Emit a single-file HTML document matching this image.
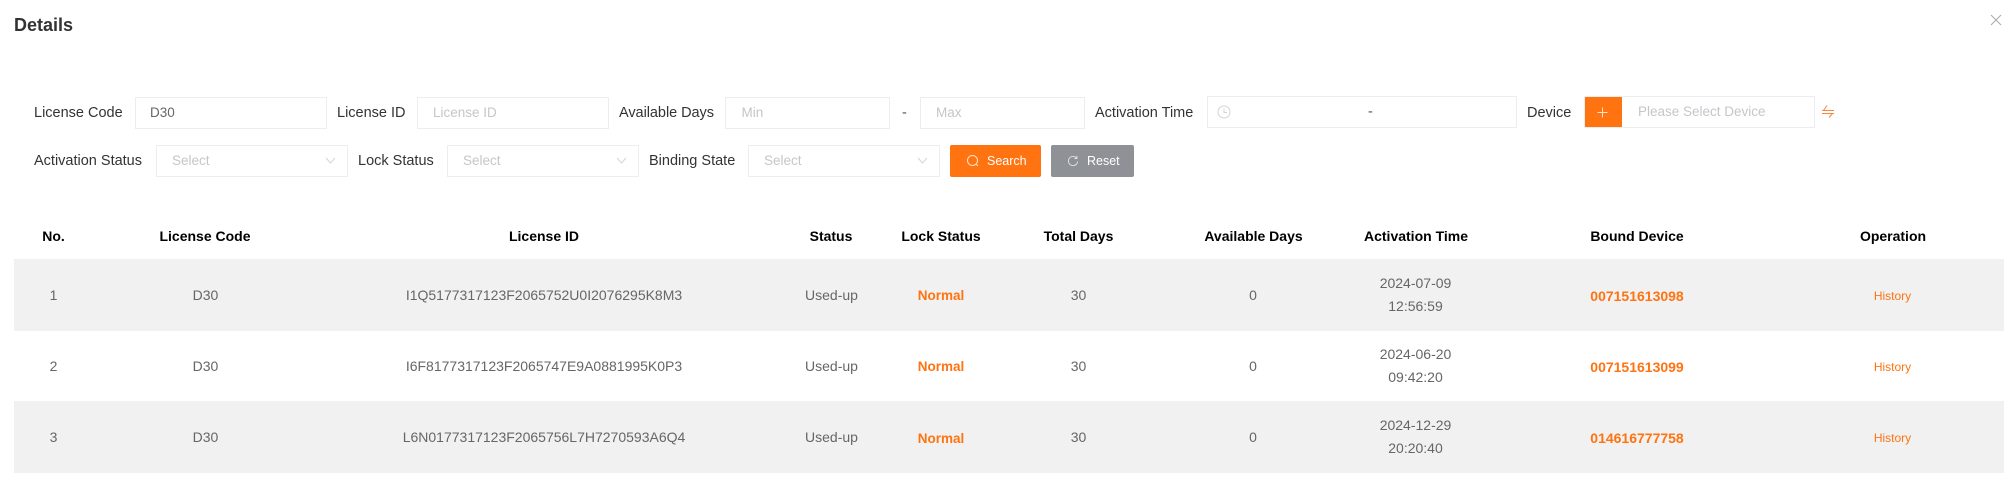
<!DOCTYPE html>
<html><head><meta charset="utf-8"><style>
html,body{margin:0;padding:0;background:#fff;width:2008px;height:479px;overflow:hidden;font-family:"Liberation Sans",sans-serif}
.a{position:absolute;white-space:nowrap}
.l{font-size:14.5px;color:#333;line-height:20px}
.b{position:absolute;box-sizing:border-box;border:1px solid #ebedf0;background:#fff}
.p{font-size:13.5px;color:#c4c6ca;line-height:20px}
.h{font-size:14px;font-weight:bold;color:#000;line-height:20px;transform:translateX(-50%);top:226px}
.c{font-size:14px;color:#666;line-height:20px;transform:translateX(-50%);text-align:center}
.o{font-size:14px;color:#ff7311;font-weight:500;line-height:20px;transform:translateX(-50%)}
.r{position:absolute;left:14px;width:1990px;background:#f1f1f1}
svg{position:absolute}
</style></head><body>
<div class="a" style="left:14px;top:14px;font-size:18px;font-weight:bold;color:#333;line-height:22px">Details</div>
<svg style="left:1990px;top:14px" width="12" height="12" viewBox="0 0 12 12"><path d="M1 1L11 11M11 1L1 11" stroke="#aaa" stroke-width="1" fill="none"/></svg>

<div class="a l" style="left:34px;top:102.5px">License Code</div>
<div class="b" style="left:135px;top:97px;width:192px;height:32px"></div>
<div class="a" style="left:150px;top:103px;font-size:13.5px;color:#666;line-height:20px">D30</div>
<div class="a l" style="left:337px;top:102.5px">License ID</div>
<div class="b" style="left:417px;top:97px;width:192px;height:32px"></div>
<div class="a p" style="left:433px;top:103px">License ID</div>
<div class="a l" style="left:619px;top:102.5px;letter-spacing:-0.05px">Available Days</div>
<div class="b" style="left:725px;top:97px;width:165px;height:32px"></div>
<div class="a p" style="left:741.5px;top:103px">Min</div>
<div class="a l" style="left:902px;top:102.5px;color:#555">-</div>
<div class="b" style="left:920px;top:97px;width:165px;height:32px"></div>
<div class="a p" style="left:936px;top:103px">Max</div>
<div class="a l" style="left:1095px;top:102.5px">Activation Time</div>
<div class="b" style="left:1207px;top:96px;width:310px;height:32px"></div>
<svg style="left:1217px;top:105px" width="14" height="14" viewBox="0 0 14 14"><circle cx="7" cy="7" r="6" stroke="#d2d4d7" fill="none"/><path d="M7 3.5V7.5H10" stroke="#d2d4d7" fill="none"/></svg>
<div class="a l" style="left:1368px;top:101.5px;color:#555">-</div>
<div class="a l" style="left:1527px;top:102.5px">Device</div>
<div class="b" style="left:1584px;top:96px;width:231px;height:32px"></div>
<div class="a" style="left:1585px;top:97px;width:37px;height:30px;background:#ff7311"></div>
<svg style="left:1597px;top:107px" width="11" height="11" viewBox="0 0 11 11"><path d="M5.5 0.5V10.5M0.5 5.5H10.5" stroke="#ffe3cc" stroke-width="1" fill="none"/></svg>
<div class="a p" style="left:1638px;top:102px">Please Select Device</div>
<svg style="left:1821px;top:104px" width="14" height="15" viewBox="0 0 14 15"><path d="M1 6.5H13M6 1.5L2.5 6.5M1 9.5H13M8 13.5L11.5 9.5" stroke="#f58a3c" stroke-width="1" fill="none"/></svg>

<div class="a l" style="left:34px;top:150.5px">Activation Status</div>
<div class="b" style="left:156px;top:145px;width:192px;height:32px"></div>
<div class="a p" style="left:172px;top:151px">Select</div>
<svg style="left:325px;top:157px" width="11" height="7" viewBox="0 0 11 7"><path d="M1 1L5.5 6L10 1" stroke="#d2d4d7" fill="none"/></svg>
<div class="a l" style="left:358px;top:150.5px">Lock Status</div>
<div class="b" style="left:447px;top:145px;width:192px;height:32px"></div>
<div class="a p" style="left:463px;top:151px">Select</div>
<svg style="left:616px;top:157px" width="11" height="7" viewBox="0 0 11 7"><path d="M1 1L5.5 6L10 1" stroke="#d2d4d7" fill="none"/></svg>
<div class="a l" style="left:649px;top:150.5px">Binding State</div>
<div class="b" style="left:748px;top:145px;width:192px;height:32px"></div>
<div class="a p" style="left:764px;top:151px">Select</div>
<svg style="left:917px;top:157px" width="11" height="7" viewBox="0 0 11 7"><path d="M1 1L5.5 6L10 1" stroke="#d2d4d7" fill="none"/></svg>

<div class="a" style="left:950px;top:145px;width:91px;height:32px;background:#ff7311;border-radius:2px"></div>
<svg style="left:966px;top:154px" width="14" height="14" viewBox="0 0 14 14"><circle cx="6.5" cy="6.5" r="5" stroke="#ffe3cc" fill="none"/><path d="M10 10L12 12" stroke="#ffe3cc" fill="none"/></svg>
<div class="a" style="left:987px;top:151px;font-size:12.5px;color:#fff;line-height:20px">Search</div>
<div class="a" style="left:1051px;top:145px;width:83px;height:32px;background:#8e9196;border-radius:2px"></div>
<svg style="left:1067px;top:155px" width="12" height="12" viewBox="0 0 13 13"><path d="M10.5 3.5A5 5 0 1 0 11.5 7M10.8 1V3.8H8" stroke="#e4e4e4" fill="none"/></svg>
<div class="a" style="left:1087px;top:151px;font-size:12.5px;color:#fff;line-height:20px">Reset</div>

<div class="a h" style="left:53.5px">No.</div>
<div class="a h" style="left:205px">License Code</div>
<div class="a h" style="left:544px">License ID</div>
<div class="a h" style="left:831px">Status</div>
<div class="a h" style="left:941px">Lock Status</div>
<div class="a h" style="left:1078.5px">Total Days</div>
<div class="a h" style="left:1253.5px">Available Days</div>
<div class="a h" style="left:1416px">Activation Time</div>
<div class="a h" style="left:1637px">Bound Device</div>
<div class="a h" style="left:1893px">Operation</div>

<div class="r" style="top:259px;height:72px"></div>
<div class="r" style="top:401px;height:72px"></div>

<div class="a c" style="left:53.5px;top:285px">1</div>
<div class="a c" style="left:205.5px;top:285px">D30</div>
<div class="a c" style="left:544px;top:285px">I1Q5177317123F2065752U0I2076295K8M3</div>
<div class="a c" style="left:831.5px;top:285px">Used-up</div>
<div class="a o" style="left:941px;top:286px;font-weight:bold;font-size:13.5px">Normal</div>
<div class="a c" style="left:1078.5px;top:285px">30</div>
<div class="a c" style="left:1253px;top:285px">0</div>
<div class="a c" style="left:1415.5px;top:272px;line-height:23px">2024-07-09<br>12:56:59</div>
<div class="a o" style="left:1637px;top:286px;font-weight:bold">007151613098</div>
<div class="a o" style="left:1892.5px;top:285.5px;font-size:12px;font-weight:normal">History</div>

<div class="a c" style="left:53.5px;top:356px">2</div>
<div class="a c" style="left:205.5px;top:356px">D30</div>
<div class="a c" style="left:544px;top:356px">I6F8177317123F2065747E9A0881995K0P3</div>
<div class="a c" style="left:831.5px;top:356px">Used-up</div>
<div class="a o" style="left:941px;top:357px;font-weight:bold;font-size:13.5px">Normal</div>
<div class="a c" style="left:1078.5px;top:356px">30</div>
<div class="a c" style="left:1253px;top:356px">0</div>
<div class="a c" style="left:1415.5px;top:343px;line-height:23px">2024-06-20<br>09:42:20</div>
<div class="a o" style="left:1637px;top:357px;font-weight:bold">007151613099</div>
<div class="a o" style="left:1892.5px;top:356.5px;font-size:12px;font-weight:normal">History</div>

<div class="a c" style="left:53.5px;top:427px">3</div>
<div class="a c" style="left:205.5px;top:427px">D30</div>
<div class="a c" style="left:544px;top:427px">L6N0177317123F2065756L7H7270593A6Q4</div>
<div class="a c" style="left:831.5px;top:427px">Used-up</div>
<div class="a o" style="left:941px;top:429px;font-weight:bold;font-size:13.5px">Normal</div>
<div class="a c" style="left:1078.5px;top:427px">30</div>
<div class="a c" style="left:1253px;top:427px">0</div>
<div class="a c" style="left:1415.5px;top:414px;line-height:23px">2024-12-29<br>20:20:40</div>
<div class="a o" style="left:1637px;top:428px;font-weight:bold">014616777758</div>
<div class="a o" style="left:1892.5px;top:427.5px;font-size:12px;font-weight:normal">History</div>
</body></html>
